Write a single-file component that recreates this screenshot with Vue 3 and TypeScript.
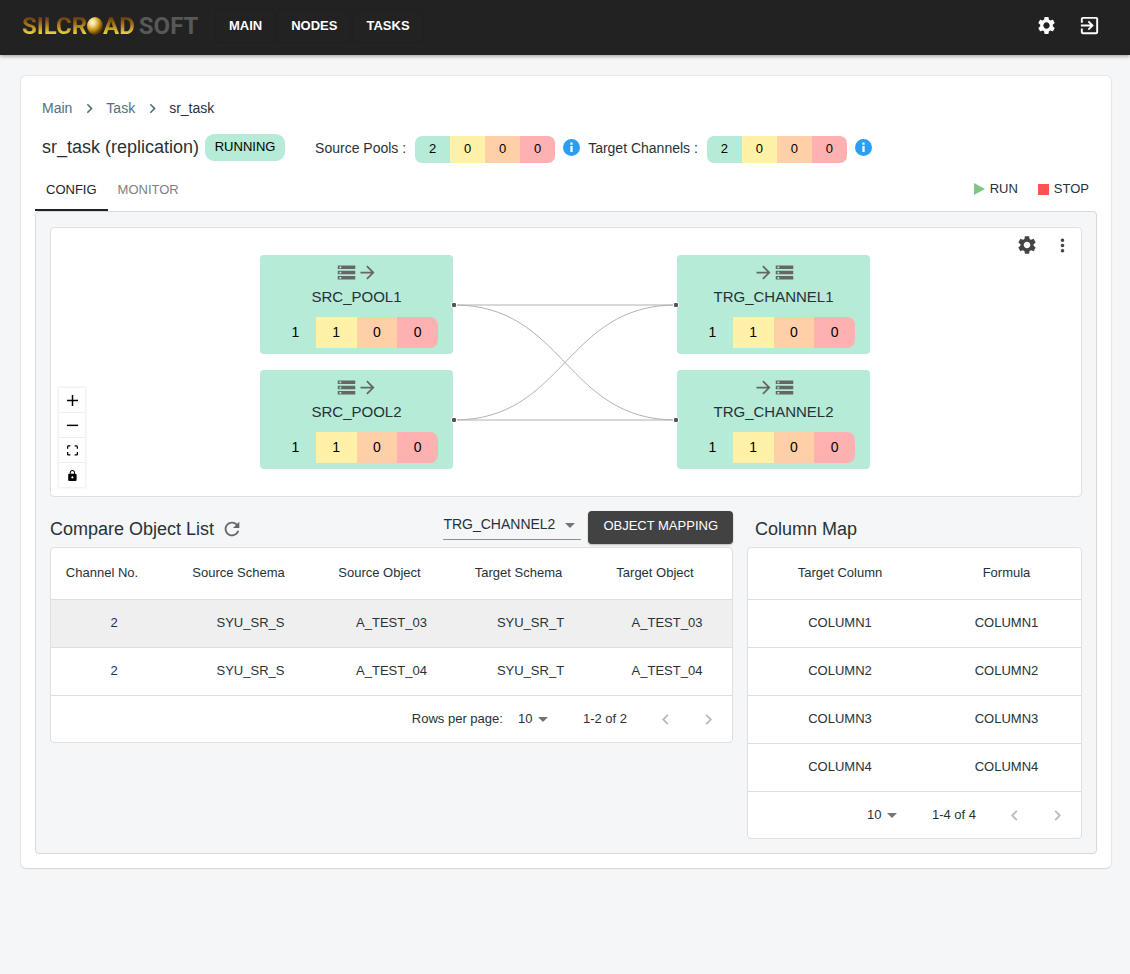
<script setup lang="ts">
import { ref } from 'vue'

interface FlowNode {
  id: string
  kind: 'source' | 'target'
  row: 'first' | 'second'
  counts: number[]
}

interface MappedObject {
  channel: number
  sourceSchema: string
  sourceObject: string
  targetSchema: string
  targetObject: string
}

const navItems = ['MAIN', 'NODES', 'TASKS']

const pools = [
  { label: 'Source Pools :', counts: [2, 0, 0, 0] },
  { label: 'Target Channels :', counts: [2, 0, 0, 0] },
]

const tabs = ['CONFIG', 'MONITOR']
const activeTab = ref('CONFIG')

const nodes: FlowNode[] = [
  { id: 'SRC_POOL1', kind: 'source', row: 'first', counts: [1, 1, 0, 0] },
  { id: 'SRC_POOL2', kind: 'source', row: 'second', counts: [1, 1, 0, 0] },
  { id: 'TRG_CHANNEL1', kind: 'target', row: 'first', counts: [1, 1, 0, 0] },
  { id: 'TRG_CHANNEL2', kind: 'target', row: 'second', counts: [1, 1, 0, 0] },
]

const edges = [
  'M194 50H416',
  'M194 165H416',
  'M194 50C305 50 305 165 416 165',
  'M194 165C305 165 305 50 416 50',
]

const controls = [
  { label: 'Zoom in', box: '0 0 32 32', path: 'M32 18.133H18.133V32h-4.266V18.133H0v-4.266h13.867V0h4.266v13.867H32z' },
  { label: 'Zoom out', box: '0 0 32 5', path: 'M0 0h32v4.2H0z' },
  {
    label: 'Fit view',
    box: '0 0 32 30',
    path: 'M3.692 4.63c0-.53.4-.938.939-.938h5.215V0H4.708C2.13 0 0 2.054 0 4.63v5.216h3.692V4.631zM27.354 0h-5.2v3.692h5.17c.53 0 .984.4.984.939v5.215H32V4.631A4.624 4.624 0 0027.354 0zm.954 24.83c0 .532-.4.94-.939.94h-5.215v3.768h5.215c2.577 0 4.631-2.13 4.631-4.707v-5.139h-3.692v5.139zm-23.677.94c-.531 0-.939-.4-.939-.94v-5.138H0v5.139c0 2.577 2.13 4.707 4.708 4.707h5.138V25.77H4.631z',
  },
  {
    label: 'Lock',
    box: '0 0 25 32',
    path: 'M21.333 10.667H19.81V7.619C19.81 3.429 16.38 0 12.19 0 8 0 4.571 3.429 4.571 7.619v3.048H3.048A3.056 3.056 0 000 13.714v15.238A3.056 3.056 0 003.048 32h18.285a3.056 3.056 0 003.048-3.048V13.714a3.056 3.056 0 00-3.048-3.047zM12.19 24.533a3.056 3.056 0 01-3.047-3.047 3.056 3.056 0 013.047-3.048 3.056 3.056 0 013.048 3.048 3.056 3.056 0 01-3.048 3.047zm4.724-13.866H7.467V7.619c0-2.59 2.133-4.724 4.723-4.724 2.591 0 4.724 2.133 4.724 4.724v3.048z',
  },
]

const channels = ['TRG_CHANNEL1', 'TRG_CHANNEL2']
const channel = ref('TRG_CHANNEL2')

const objectHeaders = ['Channel No.', 'Source Schema', 'Source Object', 'Target Schema', 'Target Object']
const objects: MappedObject[] = [
  { channel: 2, sourceSchema: 'SYU_SR_S', sourceObject: 'A_TEST_03', targetSchema: 'SYU_SR_T', targetObject: 'A_TEST_03' },
  { channel: 2, sourceSchema: 'SYU_SR_S', sourceObject: 'A_TEST_04', targetSchema: 'SYU_SR_T', targetObject: 'A_TEST_04' },
]
const selected = ref(0)

const columns = ['COLUMN1', 'COLUMN2', 'COLUMN3', 'COLUMN4']

const pageSizes = [10, 25, 50]
const objectPageSize = ref(10)
const columnPageSize = ref(10)

const gearPath =
  'M19.14 12.94c.04-.3.06-.61.06-.94 0-.32-.02-.64-.07-.94l2.03-1.58c.18-.14.23-.41.12-.61l-1.92-3.32c-.12-.22-.37-.29-.59-.22l-2.39.96c-.5-.38-1.03-.7-1.62-.94l-.36-2.54c-.04-.24-.24-.41-.48-.41h-3.84c-.24 0-.43.17-.47.41l-.36 2.54c-.59.24-1.13.57-1.62.94l-2.39-.96c-.22-.08-.47 0-.59.22L2.74 8.87c-.12.21-.08.47.12.61l2.03 1.58c-.05.3-.09.63-.09.94s.02.64.07.94l-2.03 1.58c-.18.14-.23.41-.12.61l1.92 3.32c.12.22.37.29.59.22l2.39-.96c.5.38 1.03.7 1.62.94l.36 2.54c.05.24.24.41.48.41h3.84c.24 0 .44-.17.47-.41l.36-2.54c.59-.24 1.13-.56 1.62-.94l2.39.96c.22.08.47 0 .59-.22l1.92-3.32c.12-.22.07-.47-.12-.61l-2.01-1.58zM12 15.6c-1.98 0-3.6-1.62-3.6-3.6s1.62-3.6 3.6-3.6 3.6 1.62 3.6 3.6-1.62 3.6-3.6 3.6z'
const storagePath =
  'M2 20h20v-4H2v4zm2-3h2v2H4v-2zM2 4v4h20V4H2zm4 3H4V5h2v2zm-4 7h20v-4H2v4zm2-3h2v2H4v-2z'
const arrowPath = 'M12 4l-1.41 1.41L16.17 11H4v2h12.17l-5.58 5.59L12 20l8-8z'
const nextPath = 'M10 6L8.59 7.41 13.17 12l-4.58 4.59L10 18l6-6z'
const prevPath = 'M15.41 7.41L14 6l-6 6 6 6 1.41-1.41L10.83 12z'
</script>

<template>
  <div class="page">
    <header class="topbar">
      <a class="logo" href="#" aria-label="Silcroad Soft">
        <span class="gold">SILCR</span>
        <svg class="orb" viewBox="0 0 16 18" aria-hidden="true">
          <defs>
            <radialGradient id="orb-fill" cx="0.34" cy="0.3" r="0.75">
              <stop offset="0" stop-color="#fffbe0" />
              <stop offset="0.25" stop-color="#f0dc8c" />
              <stop offset="0.55" stop-color="#c99a1e" />
              <stop offset="0.85" stop-color="#6e430c" />
              <stop offset="1" stop-color="#3c250c" />
            </radialGradient>
          </defs>
          <ellipse cx="8" cy="9" rx="8" ry="9" fill="url(#orb-fill)" />
        </svg>
        <span class="gold">AD</span>
        <span class="soft">SOFT</span>
      </a>
      <nav class="nav">
        <a v-for="item in navItems" :key="item" href="#">{{ item }}</a>
      </nav>
      <div class="top-actions">
        <button type="button" aria-label="Settings">
          <svg class="i21" viewBox="0 0 24 24"><path :d="gearPath" /></svg>
        </button>
        <button type="button" aria-label="Log out">
          <svg class="i23" viewBox="0 0 24 24">
            <path d="M10.09 15.59L11.5 17l5-5-5-5-1.41 1.41L12.67 11H3v2h9.67l-2.58 2.59zM19 3H5c-1.11 0-2 .9-2 2v4h2V5h14v14H5v-4H3v4c0 1.1.89 2 2 2h14c1.1 0 2-.9 2-2V5c0-1.1-.9-2-2-2z" />
          </svg>
        </button>
      </div>
    </header>

    <main class="card">
      <nav class="crumbs" aria-label="Breadcrumb">
        <a href="#">Main</a>
        <svg viewBox="0 0 24 24"><path :d="nextPath" /></svg>
        <a href="#">Task</a>
        <svg viewBox="0 0 24 24"><path :d="nextPath" /></svg>
        <span>sr_task</span>
      </nav>

      <div class="summary">
        <h1>sr_task (replication)</h1>
        <span class="status">RUNNING</span>
        <div class="pools">
          <div v-for="pool in pools" :key="pool.label" class="pool">
            <span class="pool-label">{{ pool.label }}</span>
            <span class="counts">
              <span v-for="(n, i) in pool.counts" :key="i">{{ n }}</span>
            </span>
            <button type="button" class="info" :aria-label="pool.label + ' details'">
              <svg viewBox="0 0 24 24">
                <path d="M12 0a12 12 0 100 24 12 12 0 000-24zm1.6 18.5h-3.2V10h3.2zm0-10.3h-3.2V5h3.2z" />
              </svg>
            </button>
          </div>
        </div>
      </div>

      <div class="tabbar">
        <div class="tabs" role="tablist">
          <button
            v-for="tab in tabs"
            :key="tab"
            type="button"
            role="tab"
            :aria-selected="tab === activeTab"
            :class="{ active: tab === activeTab }"
            @click="activeTab = tab"
          >
            {{ tab }}
          </button>
        </div>
        <div class="task-actions">
          <button type="button">
            <svg class="run" viewBox="0 0 11 12"><path d="M0 0l11 6-11 6z" /></svg>RUN
          </button>
          <button type="button">
            <svg class="stop" viewBox="0 0 11 11"><path d="M0 0h11v11H0z" /></svg>STOP
          </button>
        </div>
      </div>

      <section class="panel">
        <div class="graph">
          <div class="graph-tools">
            <button type="button" aria-label="Graph settings">
              <svg class="i22" viewBox="0 0 24 24"><path :d="gearPath" /></svg>
            </button>
            <button type="button" aria-label="More">
              <svg class="i21" viewBox="0 0 24 24">
                <path d="M12 8c1.1 0 2-.9 2-2s-.9-2-2-2-2 .9-2 2 .9 2 2 2zm0 2c-1.1 0-2 .9-2 2s.9 2 2 2 2-.9 2-2-.9-2-2-2zm0 6c-1.1 0-2 .9-2 2s.9 2 2 2 2-.9 2-2-.9-2-2-2z" />
              </svg>
            </button>
          </div>

          <div class="stage">
            <svg class="edges" viewBox="0 0 610 214">
              <path v-for="edge in edges" :key="edge" :d="edge" />
            </svg>
            <div v-for="node in nodes" :key="node.id" class="node" :class="[node.kind, node.row]">
              <div class="node-icons">
                <svg class="i21" viewBox="0 0 24 24"><path :d="storagePath" /></svg>
                <svg class="i21" viewBox="0 0 24 24"><path :d="arrowPath" /></svg>
              </div>
              <div class="node-name">{{ node.id }}</div>
              <div class="counts wide">
                <span v-for="(n, i) in node.counts" :key="i">{{ n }}</span>
              </div>
              <i class="handle"></i>
            </div>
          </div>

          <div class="controls">
            <button v-for="c in controls" :key="c.label" type="button" :aria-label="c.label">
              <svg :viewBox="c.box"><path :d="c.path" /></svg>
            </button>
          </div>
        </div>

        <div class="lists">
          <section class="list">
            <div class="list-head">
              <h2>Compare Object List</h2>
              <button type="button" class="refresh" aria-label="Refresh">
                <svg class="i22" viewBox="0 0 24 24">
                  <path d="M17.65 6.35C16.2 4.9 14.21 4 12 4c-4.42 0-7.99 3.58-7.99 8s3.57 8 7.99 8c3.73 0 6.84-2.55 7.73-6h-2.08c-.82 2.33-3.04 4-5.65 4-3.31 0-6-2.69-6-6s2.69-6 6-6c1.66 0 3.14.69 4.22 1.78L13 11h7V4l-2.35 2.35z" />
                </svg>
              </button>
              <div class="channel-select">
                <select v-model="channel" aria-label="Target channel">
                  <option v-for="c in channels" :key="c">{{ c }}</option>
                </select>
                <svg viewBox="0 0 10 5"><path d="M0 0h10L5 5z" /></svg>
              </div>
              <button type="button" class="mapping">OBJECT MAPPING</button>
            </div>
            <div class="grid-box">
              <table>
                <colgroup>
                  <col class="c1" /><col class="c2" /><col class="c3" /><col class="c4" /><col class="c5" />
                </colgroup>
                <thead>
                  <tr class="sortable">
                    <th v-for="h in objectHeaders" :key="h" scope="col">{{ h }}</th>
                  </tr>
                </thead>
                <tbody>
                  <tr v-for="(o, i) in objects" :key="i" :class="{ selected: i === selected }" @click="selected = i">
                    <td>{{ o.channel }}</td>
                    <td>{{ o.sourceSchema }}</td>
                    <td>{{ o.sourceObject }}</td>
                    <td>{{ o.targetSchema }}</td>
                    <td>{{ o.targetObject }}</td>
                  </tr>
                </tbody>
              </table>
              <div class="pager">
                <label for="object-rows">Rows per page:</label>
                <div class="rows-select">
                  <select id="object-rows" v-model="objectPageSize">
                    <option v-for="s in pageSizes" :key="s" :value="s">{{ s }}</option>
                  </select>
                  <svg viewBox="0 0 10 5"><path d="M0 0h10L5 5z" /></svg>
                </div>
                <span class="range">1-2 of 2</span>
                <button type="button" aria-label="Previous page" disabled>
                  <svg class="i21" viewBox="0 0 24 24"><path :d="prevPath" /></svg>
                </button>
                <button type="button" aria-label="Next page" disabled>
                  <svg class="i21" viewBox="0 0 24 24"><path :d="nextPath" /></svg>
                </button>
              </div>
            </div>
          </section>

          <section class="list">
            <div class="list-head indented">
              <h2>Column Map</h2>
            </div>
            <div class="grid-box">
              <table>
                <colgroup>
                  <col class="m1" /><col class="m2" />
                </colgroup>
                <thead>
                  <tr>
                    <th scope="col">Target Column</th>
                    <th scope="col">Formula</th>
                  </tr>
                </thead>
                <tbody>
                  <tr v-for="c in columns" :key="c">
                    <td>{{ c }}</td>
                    <td>{{ c }}</td>
                  </tr>
                </tbody>
              </table>
              <div class="pager">
                <div class="rows-select">
                  <select v-model="columnPageSize" aria-label="Rows per page">
                    <option v-for="s in pageSizes" :key="s" :value="s">{{ s }}</option>
                  </select>
                  <svg viewBox="0 0 10 5"><path d="M0 0h10L5 5z" /></svg>
                </div>
                <span class="range">1-4 of 4</span>
                <button type="button" aria-label="Previous page" disabled>
                  <svg class="i21" viewBox="0 0 24 24"><path :d="prevPath" /></svg>
                </button>
                <button type="button" aria-label="Next page" disabled>
                  <svg class="i21" viewBox="0 0 24 24"><path :d="nextPath" /></svg>
                </button>
              </div>
            </div>
          </section>
        </div>
      </section>
    </main>
  </div>
</template>

<style>
body {
  margin: 0;
  background: #f4f6f8;
}
</style>

<style scoped>
.page,
.page * {
  box-sizing: border-box;
}
.page {
  min-height: 100vh;
  font-family: 'Liberation Sans', Arial, sans-serif;
  font-size: 13px;
  line-height: 20px;
  color: #263238;
}
button,
select {
  font: inherit;
  color: inherit;
  border: 0;
  background: none;
  padding: 0;
  margin: 0;
  cursor: pointer;
}
a {
  color: inherit;
  text-decoration: none;
}
svg {
  display: block;
  fill: currentColor;
  flex: none;
}
.i21 {
  width: 21px;
  height: 21px;
}
.i22 {
  width: 22px;
  height: 22px;
}
.i23 {
  width: 23px;
  height: 23px;
}

/* top bar */
.topbar {
  display: flex;
  align-items: center;
  height: 55px;
  padding: 0 29px 4px 22px;
  background: #222;
  color: #fff;
  box-shadow: 0 1px 4px rgba(0, 0, 0, 0.4);
}
.logo {
  display: flex;
  align-items: center;
  width: 178px;
  margin-right: 15px;
  font-family: Roboto, 'Liberation Sans', sans-serif;
  font-size: 24px;
  font-weight: 700;
  line-height: 32px;
}
.gold {
  color: transparent;
  background: linear-gradient(#5a3210 20%, #a8741a 45%, #e6d640 75%, #f6ee60);
  background-clip: text;
  -webkit-background-clip: text;
}
.soft {
  margin-left: 4px;
  color: #585858;
}
.orb {
  width: 16px;
  height: 18px;
}
.nav {
  display: flex;
  gap: 1px;
  font-weight: 700;
}
.nav a {
  padding: 6px 13px;
  border: 1px solid #1f1f1f;
  border-radius: 4px;
}
.top-actions {
  display: flex;
  align-items: center;
  gap: 21px;
  margin-left: auto;
}

/* card header */
.card {
  margin: 21px 19px 21px 21px;
  padding: 14px;
  background: #fff;
  border-radius: 5px;
  box-shadow: 0 0 2px rgba(0, 0, 0, 0.2), 0 1px 1px rgba(0, 0, 0, 0.08);
}
.crumbs {
  display: flex;
  align-items: center;
  margin: 8px 7px 0;
  font-size: 14px;
}
.crumbs a {
  color: #546e7a;
}
.crumbs svg {
  width: 19px;
  height: 19px;
  margin: 0 7px 0 8px;
  color: #546e7a;
}
.summary {
  display: flex;
  align-items: flex-start;
  min-height: 29px;
  margin: 16px 7px 0;
}
h1,
h2 {
  margin: 0;
  font-size: 18px;
  font-weight: 400;
  line-height: 27px;
}
.status {
  width: 80px;
  margin: 0 30px 0 6px;
  line-height: 26px;
  padding-bottom: 1px;
  text-align: center;
  color: #000;
  background: #b5ebd7;
  border-radius: 9px;
}
.pools {
  display: flex;
  gap: 8px;
}
.pool {
  display: flex;
  font-size: 14px;
}
.pool-label {
  margin-right: 9px;
  line-height: 29px;
}
.counts {
  display: flex;
  height: 27px;
  margin-top: 2px;
  overflow: hidden;
  border-radius: 7px;
  font-size: 13px;
  line-height: 26px;
  text-align: center;
  color: #000;
}
.counts span {
  width: 35px;
}
.counts span:nth-child(1) {
  background: #b5ebd7;
}
.counts span:nth-child(2) {
  background: #fff1a8;
}
.counts span:nth-child(3) {
  background: #ffcfa8;
}
.counts span:nth-child(4) {
  background: #ffb0b0;
}
.info {
  height: 27px;
  margin-left: 8px;
  color: #2a9df4;
}
.info svg {
  width: 17px;
  height: 17px;
}

/* tabs */
.tabbar {
  display: flex;
  justify-content: space-between;
  margin-top: 4px;
}
.tabs button {
  height: 44px;
  padding: 0 10px;
  border-top: 3px solid transparent;
  border-bottom: 2px solid transparent;
  color: #808080;
}
.tabs button.active {
  padding: 0 11px;
  color: #222;
  border-bottom-color: #222;
}
.task-actions {
  display: flex;
  align-items: center;
  gap: 20px;
  margin-right: 8px;
}
.task-actions button {
  display: flex;
  align-items: center;
  gap: 5px;
}
.run {
  width: 11px;
  height: 12px;
  color: #81c784;
}
.stop {
  width: 11px;
  height: 11px;
  color: #ff5252;
}

/* panel and graph */
.panel {
  padding: 15px 14px 14px;
  background: #f4f6f8;
  border: 1px solid #d6d8dc;
  border-radius: 4px;
}
.graph {
  position: relative;
  padding: 27px 2px 27px 0;
  background: #fff;
  border: 1px solid #dedfe2;
  border-radius: 4px;
}
.graph-tools {
  position: absolute;
  top: 6px;
  right: 8px;
  display: flex;
  align-items: center;
  gap: 14px;
  color: #444;
}
.stage {
  position: relative;
  width: 610px;
  height: 214px;
  margin: 0 auto;
}
.edges {
  width: 610px;
  height: 214px;
  fill: none;
  stroke: #b1b1b7;
  stroke-width: 1;
}
.node {
  position: absolute;
  width: 193px;
  height: 99px;
  padding: 7px 15px 0;
  background: #b5ebd7;
  border-radius: 4px;
}
.source {
  left: 0;
}
.target {
  right: 0;
}
.first {
  top: 0;
}
.second {
  bottom: 0;
}
.node-icons {
  display: flex;
  justify-content: center;
  color: #666;
}
.target .node-icons {
  flex-direction: row-reverse;
}
.node-name {
  margin-top: 4px;
  font-size: 15px;
  text-align: center;
}
.counts.wide {
  height: 31px;
  margin-top: 10px;
  border-radius: 8px;
  font-size: 14px;
  line-height: 30px;
}
.counts.wide span {
  flex: 1;
}
.handle {
  position: absolute;
  top: 47px;
  width: 6px;
  height: 6px;
  background: #555;
  border: 1px solid #fff;
  border-radius: 2px;
}
.source .handle {
  right: -4px;
}
.target .handle {
  left: -4px;
}
.controls {
  position: absolute;
  left: 8px;
  bottom: 9px;
  width: 26px;
  box-shadow: 0 0 2px 1px rgba(0, 0, 0, 0.08);
}
.controls button {
  display: flex;
  align-items: center;
  justify-content: center;
  width: 100%;
  height: 25px;
  color: #000;
  border-bottom: 1px solid #eee;
}
.controls button:last-child {
  height: 24px;
  border-bottom: 0;
}
.controls svg {
  width: 11px;
  height: 11px;
}

/* lists */
.lists {
  display: grid;
  grid-template-columns: 683fr 335fr;
  gap: 14px;
  align-items: start;
}
.list-head {
  display: flex;
  align-items: flex-end;
  height: 50px;
}
.list-head.indented {
  padding-left: 8px;
}
h2 {
  line-height: 36px;
}
.refresh {
  height: 36px;
  margin-left: 7px;
  color: #666;
}
.channel-select {
  position: relative;
  width: 138px;
  margin: 0 7px 7px auto;
  border-bottom: 1px solid #8b8d90;
}
select {
  appearance: none;
  outline: 0;
}
.channel-select select {
  display: block;
  width: 100%;
  height: 30px;
  font-size: 14px;
}
.channel-select svg,
.rows-select svg {
  position: absolute;
  width: 10px;
  height: 5px;
  color: #757575;
  pointer-events: none;
}
.channel-select svg {
  top: 14px;
  right: 6px;
}
.mapping {
  height: 33px;
  margin-bottom: 3px;
  padding: 0 15px 3px;
  color: #fff;
  background: #424242;
  border-radius: 4px;
  box-shadow: 0 1px 2px rgba(0, 0, 0, 0.25);
}
.grid-box {
  background: #fff;
  border: 1px solid #dedfe2;
  border-radius: 4px;
}
table {
  width: 100%;
  table-layout: fixed;
  border-collapse: separate;
  border-spacing: 0;
}
.c1 {
  width: 126px;
}
.c2 {
  width: 147px;
}
.c3 {
  width: 135px;
}
.c4 {
  width: 143px;
}
.c5 {
  width: 130px;
}
.m1 {
  width: 184px;
}
.m2 {
  width: 149px;
}
th,
td {
  height: 48px;
  padding: 0 0 2px;
  font-weight: 400;
  text-align: center;
  white-space: nowrap;
  border-bottom: 1px solid #dedfe2;
}
th {
  height: 52px;
}
.sortable th {
  padding-right: 24px;
}
.selected td {
  background: #efefef;
}
.pager {
  display: flex;
  align-items: center;
  justify-content: flex-end;
  height: 46px;
  padding-right: 13px;
}
.rows-select {
  position: relative;
  width: 31px;
  margin: 0 34px 0 15px;
}
.rows-select select {
  display: block;
  width: 100%;
  height: 22px;
}
.rows-select svg {
  top: 9px;
  right: 1px;
}
.range {
  margin-right: 28px;
}
.pager button {
  color: #b8b8b8;
}
.pager button + button {
  margin-left: 22px;
}
</style>
